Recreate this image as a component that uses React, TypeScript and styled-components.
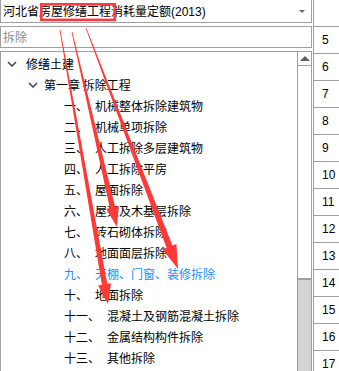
import styled, { createGlobalStyle } from "styled-components";

const GlobalStyle = createGlobalStyle`
    html, body {
        margin: 0;
        padding: 0;
        background: #ffffff;
    }
    body {
        font-family: "Noto Sans CJK SC", "Liberation Sans", sans-serif;
        font-size: 12px;
        color: #000000;
    }
`;

const Page = styled.div`
    position: relative;
    width: 339px;
    height: 371px;
    overflow: hidden;
    display: flex;
    background: #ffffff;
`;

const LeftPanel = styled.div`
    width: 312px;
    display: flex;
    flex-direction: column;
`;

const Combo = styled.div`
    height: 22px;
    border: 1px solid #a0a0a0;
    border-top: none;
    display: flex;
    align-items: center;
    padding-left: 2px;
    white-space: nowrap;
`;

const ComboText = styled.span`
    flex: 1;
    line-height: 22px;
`;

const Year = styled.span`
    font-family: "Liberation Sans", sans-serif;
    font-size: 12px;
`;

const DropArrow = styled.span`
    width: 0;
    height: 0;
    margin-right: 6px;
    border-left: 3px solid transparent;
    border-right: 3px solid transparent;
    border-top: 3px solid #6a6a6a;
`;

const Search = styled.div`
    margin-top: 3px;
    height: 20px;
    border: 1px solid #a0a0a0;
    padding-left: 2px;
    line-height: 20px;
    color: #8a8a8a;
`;

const Tree = styled.div`
    margin-top: 3px;
    flex: 1;
    display: flex;
    border: 1px solid #a0a0a0;
    border-bottom: none;
    min-height: 0;
`;

const TreeList = styled.div`
    flex: 1;
    padding-top: 1px;
`;

const Row = styled.div<{ $indent: number; $active?: boolean }>`
    height: 21px;
    line-height: 21px;
    display: flex;
    align-items: center;
    padding-left: ${(p) => p.$indent}px;
    white-space: nowrap;
    color: ${(p) => (p.$active ? "#1a8fff" : "#000000")};
`;

const Toggle = styled.span<{ $gap: number }>`
    width: 14px;
    height: 21px;
    display: flex;
    align-items: center;
    justify-content: center;
    margin-right: ${(p) => p.$gap}px;
`;

const Label = styled.span<{ $gap?: number }>`
    margin-left: ${(p) => p.$gap ?? 0}px;
`;

const Scrollbar = styled.div`
    width: 13px;
    border-left: 1px solid #a0a0a0;
    display: flex;
    flex-direction: column;
`;

const UpButton = styled.div`
    height: 13px;
    border-bottom: 1px solid #a0a0a0;
    display: flex;
    align-items: center;
    justify-content: center;
    &::after {
        content: "";
        border-left: 5px solid transparent;
        border-right: 5px solid transparent;
        border-bottom: 5px solid #5a5f6a;
    }
`;

const Thumb = styled.div`
    height: 212px;
    background: #ffffff;
    border-bottom: 2px solid #a0a0a0;
`;

const Track = styled.div`
    flex: 1;
    background: #d4d4d4;
`;

const RightCol = styled.div`
    margin-left: 1px;
    flex: 1;
    border-left: 1px solid #a0a0a0;
    display: flex;
    flex-direction: column;
`;

const Cell = styled.div`
    flex: none;
    height: 25px;
    border-bottom: 1px solid #a0a0a0;
    padding-left: 8px;
    line-height: 25px;
    font-family: "Liberation Sans", sans-serif;
    font-size: 12px;
    padding-top: 1px;
`;

const Overlay = styled.svg`
    position: absolute;
    left: 0;
    top: 0;
    pointer-events: none;
`;

const Chevron = () => (
    <svg width="10" height="6" viewBox="0 0 10 6">
        <polyline points="1,1 5,5 9,1" fill="none" stroke="#4a4a4a" strokeWidth="1.6" />
    </svg>
);

const items = [
    { no: "一、", text: "机械整体拆除建筑物" },
    { no: "二、", text: "机械单项拆除" },
    { no: "三、", text: "人工拆除多层建筑物" },
    { no: "四、", text: "人工拆除平房" },
    { no: "五、", text: "屋面拆除" },
    { no: "六、", text: "屋架及木基层拆除" },
    { no: "七、", text: "砖石砌体拆除" },
    { no: "八、", text: "地面面层拆除" },
    { no: "九、", text: "天棚、门窗、装修拆除", active: true },
    { no: "十、", text: "地面拆除" },
    { no: "十一、", text: "混凝土及钢筋混凝土拆除" },
    { no: "十二、", text: "金属结构构件拆除" },
    { no: "十三、", text: "其他拆除" },
];

const rowNumbers = ["", "5", "6", "7", "8", "9", "10", "11", "12", "13", "14", "15", "16", "17", ""];

// tapered stroke with a triangular head, like a hand-drawn annotation arrow
const arrowPoints = (sx: number, sy: number, tx: number, ty: number, head: number, half: number) => {
    const dx = tx - sx;
    const dy = ty - sy;
    const len = Math.hypot(dx, dy);
    const ux = dx / len;
    const uy = dy / len;
    const nx = -uy;
    const ny = ux;
    const bx = tx - ux * head;
    const by = ty - uy * head;
    const neck = half * 0.42;
    const tail = 0.4;
    const pts = [
        [sx + nx * tail, sy + ny * tail],
        [bx + nx * neck, by + ny * neck],
        [bx + nx * half, by + ny * half],
        [tx, ty],
        [bx - nx * half, by - ny * half],
        [bx - nx * neck, by - ny * neck],
        [sx - nx * tail, sy - ny * tail],
    ];
    return pts.map((p) => `${p[0].toFixed(1)},${p[1].toFixed(1)}`).join(" ");
};

const arrows = [
    { sx: 60, sy: 30, tx: 108, ty: 304, head: 20, half: 6.5 },
    { sx: 72, sy: 32, tx: 117, ty: 227, head: 20, half: 6.5 },
    { sx: 86, sy: 28, tx: 178, ty: 269, head: 24, half: 7.5 },
];

export default function App() {
    return (
        <>
            <GlobalStyle />
            <Page>
                <LeftPanel>
                    <Combo>
                        <ComboText>
                            河北省房屋修缮工程消耗量定额<Year>(2013)</Year>
                        </ComboText>
                        <DropArrow />
                    </Combo>
                    <Search>拆除</Search>
                    <Tree>
                        <TreeList>
                            <Row $indent={4}>
                                <Toggle $gap={7}>
                                    <Chevron />
                                </Toggle>
                                <Label>修缮土建</Label>
                            </Row>
                            <Row $indent={25}>
                                <Toggle $gap={4}>
                                    <Chevron />
                                </Toggle>
                                <Label>第一章 拆除工程</Label>
                            </Row>
                            {items.map((it) => (
                                <Row key={it.no} $indent={63} $active={it.active}>
                                    <span>{it.no}</span>
                                    <Label $gap={7}>{it.text}</Label>
                                </Row>
                            ))}
                        </TreeList>
                        <Scrollbar>
                            <UpButton />
                            <Thumb />
                            <Track />
                        </Scrollbar>
                    </Tree>
                </LeftPanel>
                <RightCol>
                    {rowNumbers.map((n, i) => (
                        <Cell key={i}>{n}</Cell>
                    ))}
                </RightCol>
                <Overlay width="339" height="371" viewBox="0 0 339 371">
                    <rect x="41.3" y="4.3" width="73.5" height="15.6" fill="none" stroke="#ff3a3a" strokeWidth="2.6" />
                    {arrows.map((a, i) => (
                        <polygon key={i} points={arrowPoints(a.sx, a.sy, a.tx, a.ty, a.head, a.half)} fill="#ff3838" />
                    ))}
                </Overlay>
            </Page>
        </>
    );
}
